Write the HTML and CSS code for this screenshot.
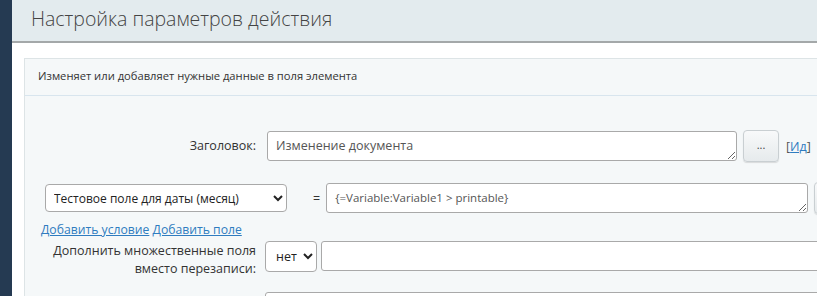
FILE: index.html
```html
<!DOCTYPE html>
<html lang="ru">
<head>
  <meta charset="UTF-8">
  <title>Настройка параметров действия</title>
  <link rel="stylesheet" href="styles.css">
</head>
<body>
  <div class="page">
    <div class="sidebar"></div>
    <div class="main">
      <div class="title-bar">
        <h1>Настройка параметров действия</h1>
      </div>

      <div class="content">
        <div class="panel">
          <div class="panel-head">Изменяет или добавляет нужные данные в поля элемента</div>

          <div class="panel-body">
            <div class="row row-title">
              <label class="label" for="title">Заголовок:</label>
              <textarea id="title" class="field field-title">Изменение документа</textarea>
              <button class="dots">...</button>
              <span class="id-link">[<a href="#">Ид</a>]</span>
            </div>

            <div class="row row-cond">
              <select class="select select-field">
                <option>Тестовое поле для даты (месяц)</option>
              </select>
              <span class="eq">=</span>
              <textarea class="field field-value">{=Variable:Variable1 &gt; printable}</textarea>
              <button class="dots dots-cut"></button>
            </div>

            <div class="links">
              <a href="#">Добавить условие</a> <a href="#">Добавить поле</a>
            </div>

            <div class="row row-merge">
              <label class="label">Дополнить множественные поля<br>вместо перезаписи:</label>
              <select class="select select-small">
                <option>нет</option>
              </select>
              <input type="text" class="field field-merge">
            </div>

            <div class="row row-next">
              <span class="label"></span>
              <input type="text" class="field field-next">
            </div>
          </div>
        </div>
      </div>
    </div>
  </div>
</body>
</html>
```

FILE: styles.css
```css
body {
  margin: 0;
  font-family: "Open Sans", "Noto Sans", sans-serif;
  color: #333;
  background: #fff;
  overflow: hidden;
}
.page {
  display: flex;
  height: 296px;
}
.sidebar {
  width: 12px;
  flex: none;
  background: #253a52;
}
.main {
  flex: 1;
  min-width: 0;
  overflow: hidden;
}
.title-bar {
  height: 41px;
  background: #e3ebee;
  border-bottom: 2px solid #a4a8a9;
}
.title-bar h1 {
  margin: 0;
  padding: 6px 0 0 19px;
  font-size: 19.5px;
  font-weight: 300;
  color: #444;
  line-height: 26px;
}
.content {
  padding: 15px 0 0 12px;
}
.panel {
  border: 1px solid #dde4e6;
  border-right: none;
  background: #f5f8f9;
  height: 300px;
}
.panel-head {
  height: 36px;
  line-height: 34px;
  padding-left: 13px;
  font-size: 11.2px;
  color: #333;
  border-bottom: 1px solid #d8e5ee;
}
.panel-body {
  padding: 34px 0 0 0;
}
.row {
  display: flex;
  align-items: center;
  white-space: nowrap;
}
.row > * {
  flex: none;
}
.label {
  width: 231px;
  text-align: right;
  font-size: 12.5px;
  color: #333;
  line-height: 20px;
}
.field {
  box-sizing: border-box;
  border: 1px solid #a9a9a9;
  border-radius: 3px;
  background: #fff;
  font-family: inherit;
  font-size: 12.5px;
  color: #555;
  padding: 5px 8px;
}
textarea.field {
  resize: both;
  overflow: hidden;
  line-height: 17px;
}
.field-title {
  width: 470px;
  height: 30px;
  margin-left: 11px;
}
.dots {
  width: 36px;
  height: 32px;
  margin-left: 6px;
  border: 1px solid #c9cfd2;
  border-radius: 4px;
  background: linear-gradient(#f8f9fa, #e6eaec);
  box-shadow: 0 1px 1px rgba(0, 0, 0, 0.12);
  font-family: inherit;
  font-size: 11px;
  color: #444;
  padding: 0 0 4px;
}
.id-link {
  margin-left: 7px;
  font-size: 12.5px;
  color: #555;
}
a {
  color: #2f7cc0;
}
.row-cond {
  margin-top: 20px;
  padding-left: 20px;
}
.select {
  box-sizing: border-box;
  border: 1px solid #a9a9a9;
  border-radius: 4px;
  background: #fff;
  font-family: inherit;
  font-size: 12px;
  color: #222;
}
.select-field {
  width: 242px;
  height: 28px;
  padding-left: 4px;
}
.eq {
  margin-left: 26px;
  font-size: 12.5px;
}
.field-value {
  width: 482px;
  height: 30px;
  margin-left: 6px;
  font-size: 11.5px;
}
.dots-cut {
  margin-left: 6px;
}
.links {
  margin-top: 6px;
  padding-left: 16px;
  font-size: 12.2px;
  line-height: 20px;
}
.row-merge {
  align-items: flex-start;
  margin-top: 1px;
}
.row-merge .label {
  line-height: 18px;
  padding-top: 1px;
}
.select-small {
  width: 52px;
  height: 31px;
  margin-left: 9px;
  padding-left: 6px;
  font-size: 12.5px;
}
.field-merge {
  width: 520px;
  height: 30px;
  margin-left: 4px;
}
.row-next {
  margin-top: 14px;
}
.field-next {
  width: 560px;
  height: 30px;
  margin-left: 9px;
}
```
